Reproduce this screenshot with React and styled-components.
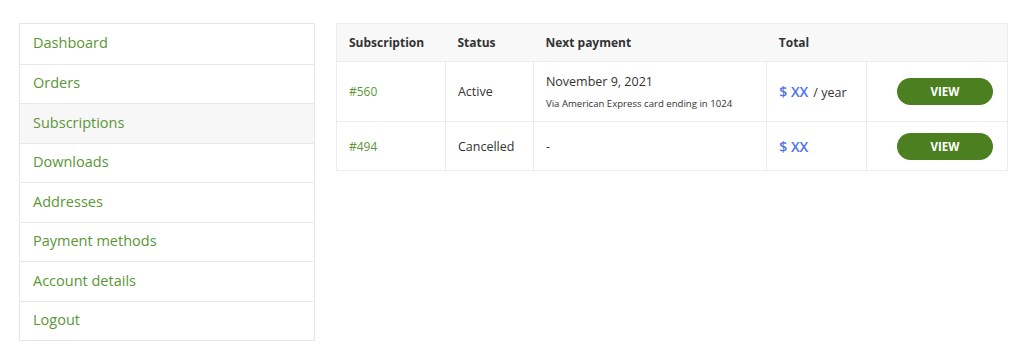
import React from 'react';
import styled, { createGlobalStyle } from 'styled-components';

const GlobalStyle = createGlobalStyle`
  html, body {
    margin: 0;
    padding: 0;
    background: #ffffff;
    font-family: "Open Sans", "Noto Sans", sans-serif;
    color: #333333;
  }
`;

const Page = styled.div`
  display: flex;
  align-items: flex-start;
  gap: 21px;
  padding: 23px 0 0 19px;
`;

const Nav = styled.nav`
  width: 296px;
  border: 1px solid #e6e6e6;
  box-sizing: border-box;
  display: flex;
  flex-direction: column;
`;

const NavItem = styled.a`
  display: flex;
  align-items: center;
  height: 39.5px;
  padding: 0 13px 2px;
  font-size: 14.5px;
  color: #5b9638;
  text-decoration: none;
  background: ${props => (props.$active ? '#f7f7f7' : '#ffffff')};
  box-sizing: border-box;

  & + & {
    border-top: 1px solid #e9e9e9;
  }
`;

const Table = styled.table`
  width: 672px;
  border-collapse: collapse;
  border: 1px solid #ececec;
  font-size: 12.5px;
`;

const HeadCell = styled.th`
  text-align: left;
  font-weight: 700;
  font-size: 12px;
  color: #333333;
  background: #f8f8f8;
  height: 38px;
  padding: 0 12px 1px;
  box-sizing: border-box;
  width: ${props => props.$w}px;
`;

const Cell = styled.td`
  padding: 0 12px;
  height: ${props => props.$h}px;
  border: 1px solid #ececec;
  vertical-align: middle;
  text-align: ${props => (props.$right ? 'right' : 'left')};
  padding-right: ${props => (props.$right ? '14px' : '12px')};
  color: #333333;
`;

const IdLink = styled.a`
  color: #5b9638;
  text-decoration: none;
  font-size: 12px;
`;

const DateText = styled.div`
  font-size: 12.5px;
  margin-bottom: 7px;
`;

const CardText = styled.div`
  font-size: 9.6px;
`;

const Price = styled.span`
  color: #4f72f0;
  font-weight: 600;
  font-size: 14px;
`;

const Per = styled.span`
  font-size: 12.5px;
  margin-left: 5px;
`;

const ViewButton = styled.button`
  width: 96px;
  height: 27px;
  border: none;
  border-radius: 14px;
  background: #4b7f1f;
  color: #ffffff;
  font-family: "Open Sans", sans-serif;
  font-weight: 700;
  font-size: 11.5px;
  cursor: pointer;
`;

const links = ['Dashboard', 'Orders', 'Subscriptions', 'Downloads', 'Addresses', 'Payment methods', 'Account details', 'Logout'];

const App = () => (
  <>
    <GlobalStyle />
    <Page>
      <Nav>
        {links.map(link => (
          <NavItem key={link} href="#" $active={link === 'Subscriptions'}>
            {link}
          </NavItem>
        ))}
      </Nav>
      <Table>
        <thead>
          <tr>
            <HeadCell $w={109}>Subscription</HeadCell>
            <HeadCell $w={88}>Status</HeadCell>
            <HeadCell $w={234}>Next payment</HeadCell>
            <HeadCell $w={100}>Total</HeadCell>
            <HeadCell $w={141}></HeadCell>
          </tr>
        </thead>
        <tbody>
          <tr>
            <Cell $h={59}><IdLink href="#">#560</IdLink></Cell>
            <Cell $h={59}>Active</Cell>
            <Cell $h={59}>
              <DateText>November 9, 2021</DateText>
              <CardText>Via American Express card ending in 1024</CardText>
            </Cell>
            <Cell $h={59}><Price>$ XX</Price><Per>/ year</Per></Cell>
            <Cell $h={59} $right><ViewButton>VIEW</ViewButton></Cell>
          </tr>
          <tr>
            <Cell $h={48}><IdLink href="#">#494</IdLink></Cell>
            <Cell $h={48}>Cancelled</Cell>
            <Cell $h={48}>-</Cell>
            <Cell $h={48}><Price>$ XX</Price></Cell>
            <Cell $h={48} $right><ViewButton>VIEW</ViewButton></Cell>
          </tr>
        </tbody>
      </Table>
    </Page>
  </>
);

export default App;
